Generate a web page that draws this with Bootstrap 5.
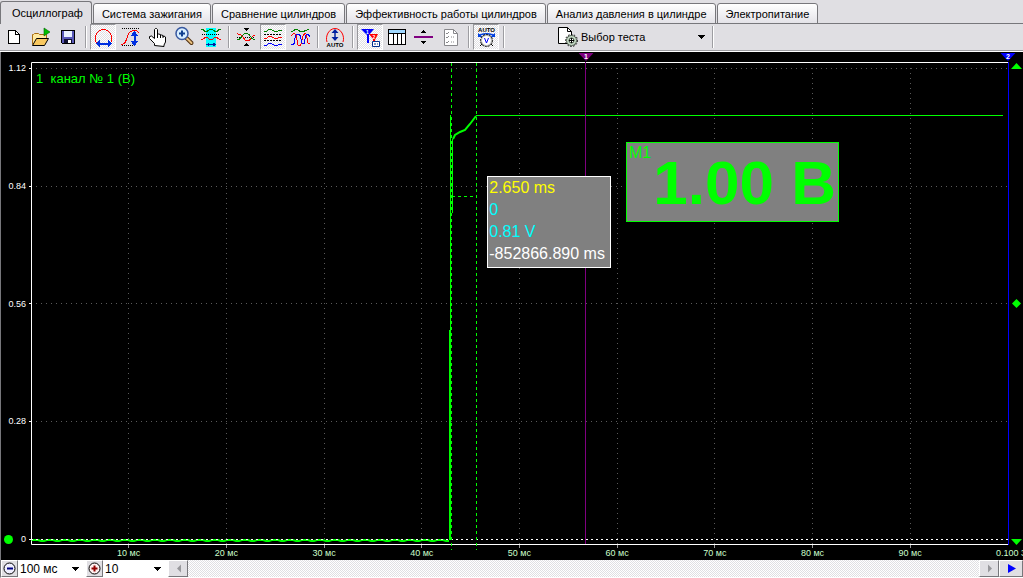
<!DOCTYPE html>
<html lang="ru">
<head>
<meta charset="utf-8">
<meta name="viewport" content="width=device-width, initial-scale=1">
<title>Осциллограф</title>
<link href="https://cdn.jsdelivr.net/npm/bootstrap@5.3.0/dist/css/bootstrap.min.css" rel="stylesheet">
<style>
  :root { --face: #e0dfe3; --edge: #9d9da1; --lime: #00ff00; }
  body { font-family: "Liberation Sans", Arial, sans-serif; font-size: 12px; line-height: 16px; background: var(--face); color: #000; }

  /* tabs */
  .mode-tabs { --bs-nav-tabs-border-width: 0; height: 24px; box-shadow: inset 0 -1px #77777b; gap: 1px; }
  .mode-tabs .nav-link { height: 21px; margin: 0; padding: 0 8px; font-size: 11px; line-height: 18px; color: #000; border: 1px solid #77777b; border-radius: 3px 3px 0 0; background: linear-gradient(#fff, #e4e3e8); white-space: nowrap; }
  .mode-tabs .nav-link.active { height: 23px; padding: 0 8px 0 11px; color: #000; background: var(--face); border-color: #77777b; border-bottom: 0; box-shadow: 0 1px var(--face); }

  /* toolbar */
  .tool-bar { height: 28px; padding: 0 0 2px 1px; gap: 1px; border-bottom: 1px solid #fff; box-shadow: inset 0 -1px var(--edge); }
  .tool { width: 26px; height: 26px; padding: 0; border: 1px solid transparent; border-radius: 0; background: none; line-height: 0; flex: none; }
  .tool svg { width: 24px; height: 24px; }
  .checker, .tool[aria-pressed="true"] { background: repeating-conic-gradient(#fff 0 25%, var(--face) 0 50%) 0 0 / 2px 2px; }
  .tool[aria-pressed="true"] { border-color: #98989c #fff #fff #98989c; }
  .divider { width: 2px; height: 22px; margin: 0 2px 0 3px; border-left: 1px solid var(--edge); border-right: 1px solid #fff; flex: none; }
  .pick { appearance: none; border: 0; border-radius: 0; padding: 0 18px 0 0; background: url("data:image/svg+xml,%3Csvg xmlns='http://www.w3.org/2000/svg' width='8' height='4' shape-rendering='crispEdges'%3E%3Cpath d='M0 0h7L3.500 4z'/%3E%3C/svg%3E") no-repeat right 6px center; color: #000; }
  .test-icon { width: 24px; height: 24px; margin-left: 48px; }
  .test-pick { width: 127px; height: 24px; font-size: 11px; background-position: right 2px center; }
  svg text { font-family: "Liberation Sans", Arial, sans-serif; font-weight: 700; text-anchor: middle; }

  /* chart */
  .scope { background: #000; border-left: 1px solid #77777b; padding-top: 10px; overflow: hidden; }
  .tick-text { font-size: 9px; line-height: 12px; color: #fff; }
  .level-axis { width: 30px; padding-right: 5px; }
  .level-axis span { text-align: right; }
  .zero-dot { left: 3px; bottom: 1px; width: 9px; height: 9px; border-radius: 50%; background: var(--lime); }
  .side-marks { width: 15px; padding-left: 3px; }
  .side-marks svg { width: 11px; height: 11px; }
  .plot svg.trace-area { display: block; position: absolute; inset: 0; width: 100%; height: 100%; overflow: visible; }
  .trace-area * { vector-effect: non-scaling-stroke; fill: none; }
  .grid-line { stroke: #5a5a5a; stroke-dasharray: 1 4; }
  .cursor-line { stroke: var(--lime); stroke-dasharray: 3 3; }
  .marker { top: -10px; width: 15px; height: 10px; transform: translateX(-50%); }
  .marker-one { left: 56.800%; }
  .marker-two { left: 100%; }
  .channel { font-size: 13px; line-height: 16px; color: var(--lime); left: 5px; top: 9px; white-space: pre; }
  .readout { left: 46.700%; top: 23.600%; padding: 0 5px 2px 1px; border: 1px solid #fff; background: #808080; color: #fff; font-size: 16px; line-height: 22px; white-space: nowrap; }
  .span-value { color: #ff0; }
  .level-value { color: #0ff; }
  .meter { left: 60.900%; top: 16.600%; width: 213px; height: 80px; border: 1px solid var(--lime); background: #808080; color: var(--lime); }
  .meter-name { left: 2px; top: 2px; font-size: 16px; line-height: 16px; }
  .meter-value { font-size: 62px; line-height: 80px; font-weight: 700; text-align: right; padding-right: 2px; white-space: nowrap; }
  .time-axis { height: 15px; padding: 2px 15px 0 30px; }
  .time-axis .tick-row { margin: 0 -5% 0 5%; }
  .time-axis span { flex: 0 0 10%; text-align: center; color: #cfc; white-space: nowrap; }
  .time-axis span:last-child { text-align: left; padding-left: 37px; }

  /* bottom bar */
  .scale-bar { height: 18px; background: var(--face); border-left: 1px solid #77777b; border-bottom: 1px solid #fff; }
  .step { height: 17px; width: 17px; padding: 0; border: 1px solid; border-color: #fff #77777b #77777b #fff; border-radius: 0; background: var(--face); line-height: 0; flex: none; }
  .step svg { width: 15px; height: 15px; }
  .step-wide { width: 20px; }
  .step-run { width: 24px; }
  .scale-bar .pick { background-color: #fff; height: 17px; padding-left: 2px; }
  .span-pick { width: 68px; }
  .gain-pick { width: 65px; }
</style>
</head>
<body class="d-flex flex-column min-vh-100">
<div class="nav nav-tabs mode-tabs flex-nowrap align-items-end" role="tablist">
  <button class="nav-link active" role="tab" aria-selected="true">Осциллограф</button>
  <button class="nav-link" role="tab">Система зажигания</button>
  <button class="nav-link" role="tab">Сравнение цилиндров</button>
  <button class="nav-link" role="tab">Эффективность работы цилиндров</button>
  <button class="nav-link" role="tab">Анализ давления в цилиндре</button>
  <button class="nav-link" role="tab">Электропитание</button>
</div>

<div class="tool-bar d-flex align-items-center" role="toolbar" aria-label="Инструменты">
  <button class="tool" aria-label="Новый"><svg viewBox="0 0 24 24" shape-rendering="crispEdges"><path d="M6.500 5.500h7l4 4v9h-11z" fill="#fff" stroke="#000"/><path d="M13.500 5.500v4h4" fill="none" stroke="#000"/></svg></button>
  <button class="tool" aria-label="Открыть"><svg viewBox="0 0 24 24"><path d="M3.500 19.500v-10h1l1-1h4l1 1h7v4" fill="#ffe9a0" stroke="#a86c10"/><path d="M3.500 20.500l4-7h12l-4 7z" fill="#f8c860" stroke="#000"/><path d="M15 3l6 4-6 4z" fill="#00c000" stroke="#006000" stroke-width=".6"/></svg></button>
  <button class="tool" aria-label="Сохранить"><svg viewBox="0 0 24 24" shape-rendering="crispEdges"><path d="M5.500 5.500h13v13h-12l-1-1z" fill="#5858b8" stroke="#000"/><path d="M8 6h8v6H8z" fill="#e8f0ff"/><path d="M8 14h8v4H8z" fill="#101030"/><path d="M12 15h3v3h-3z" fill="#fff"/></svg></button>
  <div class="divider"></div>
  <button class="tool" aria-pressed="true" aria-label="Масштаб по времени"><svg viewBox="0 0 24 24" shape-rendering="crispEdges"><path d="M5.500 18C2 13 6 4.500 12.500 4.500S23 13 19.500 18" fill="none" stroke="#f00"/><path d="M8 18.500h10" stroke="#0030e0" stroke-width="2"/><path d="M5 18.500l4-4v8zM21 18.500l-4-4v8z" fill="#0030e0"/></svg></button>
  <button class="tool" aria-label="Масштаб по уровню"><svg viewBox="0 0 24 24" shape-rendering="crispEdges"><path d="M4 3.500h17M4 20.500h12" stroke="#000" stroke-dasharray="1 1"/><path d="M3 19.500c8 0 4-14 13-14 3 0 4 1 5 2" fill="none" stroke="#f00"/><path d="M16.500 8v11" stroke="#0030e0" stroke-width="2"/><path d="M16.500 6l-4 5h8zM16.500 21l-4-5h8z" fill="#0030e0"/></svg></button>
  <button class="tool" aria-label="Рука"><svg viewBox="0 0 24 24"><path d="M9.500 20.500v-2L4.500 13.500v-2l2-.5 3 2.500V4.500l1-1h1l1 1v5l1-.5 2 .5v1l1-.5 1.500.5v1l1-.5 1.500 1v5l-1.500 3v1.500z" fill="#fff" stroke="#000"/><path d="M12.500 9v4M15.500 10v3M18 11v2" stroke="#000"/></svg></button>
  <button class="tool" aria-label="Лупа"><svg viewBox="0 0 24 24"><path d="M14.500 13l5 5" stroke="#503010" stroke-width="4" stroke-linecap="round"/><path d="M15 13.500l4.500 4.500" stroke="#e8c080" stroke-width="2" stroke-linecap="round"/><circle cx="10" cy="8.500" r="6" fill="#d8eeff" stroke="#3858a0" stroke-width="1.500"/><path d="M7 8.500h6M10 5.500v6" stroke="#104090" stroke-width="2"/></svg></button>
  <button class="tool" aria-label="Выделение интервала"><svg viewBox="0 0 24 24" shape-rendering="crispEdges"><path d="M7 3h10v19H7z" fill="#0ff"/><path d="M2 4c4 0 3 3 5 3s2-3 5-3 3 3 5 3 1-3 5-3" fill="none" stroke="#008000"/><path d="M3 9.500h18" stroke="#000" stroke-dasharray="1 1"/><path d="M2 15c3 0 3-3 5-3s3 3 5 3 3-3 5-3 2 3 5 3" fill="none" stroke="#f00"/><path d="M9 19.500h6" stroke="#0020a0"/><path d="M7 19.500l3-2v4zM17 19.500l-3-2v4z" fill="#0020a0"/></svg></button>
  <div class="divider"></div>
  <button class="tool" aria-label="Сжать"><svg viewBox="0 0 24 24" shape-rendering="crispEdges"><path d="M3 12.500h18" stroke="#000" stroke-dasharray="1 1"/><path d="M3 9c7-1 6 7 10 7s5-6 8-6" fill="none" stroke="#f00"/><path d="M3 15c5 0 5-7 9-7s5 7 9 7" fill="none" stroke="#008000"/><path d="M9 3h6l-3 3zM9 21h6l-3-3z"/></svg></button>
  <button class="tool" aria-pressed="true" aria-label="Раздельно"><svg viewBox="0 0 24 24" shape-rendering="crispEdges"><path d="M3 9.500h18M3 15.500h18" stroke="#000" stroke-dasharray="2 1"/><path d="M3 7c5 0 3-3 6-3s3 3 6 3 2-3 6-1" fill="none" stroke="#008000"/><path d="M3 14c5 0 3-3 6-3s3 3 6 3 2-3 6-1" fill="none" stroke="#f00"/><path d="M3 21c5 0 3-3 6-3s3 3 6 3 2-3 6-1" fill="none" stroke="#00f"/></svg></button>
  <button class="tool" aria-label="Наложить"><svg viewBox="0 0 24 24" shape-rendering="crispEdges"><path d="M3 7c3 0 3-3 5-3s3 3 6 3 3-3 7-2" fill="none" stroke="#008000"/><path d="M3 11c3-4 6-3 6 4 0 7 4 8 5 0s5-8 5-2 2 6 3 6" fill="none" stroke="#f00"/><path d="M3 20c4 0 3-2 4-7s5-6 6 1 4 6 4 0 3-6 5-2" fill="none" stroke="#00f"/></svg></button>
  <div class="divider"></div>
  <button class="tool" aria-label="Автомасштаб"><svg viewBox="0 0 24 24"><path d="M4 17C2 11 6 3.500 12 3.500s10 7.500 8 13.500" fill="none" stroke="#f00"/><path d="M12 6v8" stroke="#0020a0" stroke-width="1.500"/><path d="M12 4l-3.500 4h7zM12 16l-3.500-4h7z" fill="#0020a0"/><text x="12" y="22" font-size="6">AUTO</text></svg></button>
  <div class="divider"></div>
  <button class="tool" aria-pressed="true" aria-label="Маркеры"><svg viewBox="0 0 24 24"><path d="M3 4h13l-5 6v8h-2v-8z" fill="#00f"/><path d="M11 9h9l-3 6v3h-2v-4z" fill="#f00"/><text x="9.500" y="9" font-size="5" fill="#fff">1</text><text x="16" y="14" font-size="5" fill="#fff">2</text><path d="M14.500 16.500h7v5h-7z" fill="#fff" stroke="#003090"/><path d="M16 19h2m1 0h1" stroke="#003090"/></svg></button>
  <button class="tool" aria-label="Таблица"><svg viewBox="0 0 24 24" shape-rendering="crispEdges"><path d="M3.500 4.500h17v15h-17z" fill="#fff" stroke="#000"/><path d="M4 5h16v3H4z" fill="#a0d8ff"/><path d="M3.500 8.500h17M8.500 8v11M12.500 8v11M16.500 8v11" fill="none" stroke="#000"/></svg></button>
  <button class="tool" aria-label="Уровень"><svg viewBox="0 0 24 24" shape-rendering="crispEdges"><path d="M2 11h19v2H2z" fill="purple"/><path d="M9 8h5l-2.500-3zM9 16h5l-2.500 3z"/></svg></button>
  <button class="tool" aria-label="Список"><svg viewBox="0 0 24 24"><path d="M5.500 4.500h9l4 4v12h-13z" fill="#fff" stroke="#88888c"/><path d="M14.500 4.500v4h4M7 8l1 1 2-2M7 12l1 1 2-2M7 17l1 1 2-2M12 12h1m1 0h1M12 17h1m1 0h1" fill="none" stroke="#88888c"/></svg></button>
  <div class="divider"></div>
  <button class="tool" aria-pressed="true" aria-label="Автоматический вольтметр"><svg viewBox="0 0 24 24"><text x="12.500" y="7" font-size="6">AUTO</text><path d="M5 11c2-3 13-3 15 0" fill="none" stroke="#0040e0" stroke-width="1.500"/><path d="M4 8v4h5zM21 8v4h-5z" fill="#0040e0"/><path d="M6 21l2-2m9 0l2 2" stroke="#000"/><circle cx="12.500" cy="15.500" r="6" fill="#bbb" stroke="#000" stroke-dasharray="2 1"/><circle cx="12.500" cy="15.500" r="4.500" fill="#fff"/><path d="M10.500 13l2 5 2-5" fill="none" stroke="#00f"/></svg></button>
  <div class="divider"></div>
  <svg class="test-icon" viewBox="0 0 24 24"><path d="M2.500 2.500h9l4 4v12h-13z" fill="#fff" stroke="#000"/><path d="M11.500 2.500v4h4" fill="none" stroke="#000"/><circle cx="15.500" cy="15.500" r="5" fill="#c8dcc8" stroke="#506050"/><circle cx="15.500" cy="15.500" r="6" fill="none" stroke="#000" stroke-dasharray="1.500 1.500"/><circle cx="15.500" cy="15.500" r="2.500" fill="#fff" stroke="#304030"/><path d="M13 15.500h5M15.500 13v5" stroke="#000"/></svg>
  <select class="pick test-pick" aria-label="Выбор теста"><option>Выбор теста</option></select>
  <div class="divider"></div>
</div>

<main class="scope flex-grow-1 d-flex flex-column">
  <div class="d-flex flex-grow-1">
    <div class="level-axis tick-text position-relative d-flex flex-column justify-content-between">
      <span>1.12</span><span>0.84</span><span>0.56</span><span>0.28</span><span>0</span>
      <div class="zero-dot position-absolute"></div>
    </div>
    <div class="plot position-relative flex-grow-1">
      <svg class="trace-area" viewBox="0 0 977 483" preserveAspectRatio="none">
        <g id="grid"></g>
        <path stroke="#fff" d="M0.500 0.500H977M0.500 0.500V482.500H977"/>
        <path stroke="#fff" d="M-2 6.500H0M-2 124.500H0M-2 241.500H0M-2 359.500H0M-2 477.500H0"/>
        <path id="noise" stroke="#0f0" stroke-width="2"/>
        <path stroke="#fff" stroke-dasharray="2 3" d="M0 477.500H977"/>
        <path stroke="#0f0" stroke-width="2" d="M419 478V268"/>
        <path stroke="#0f0" d="M419.500 268V53M421.500 151V77"/>
        <path stroke="#0f0" stroke-width="2" d="M422 77L424 73L429 70L434 68L439 62L445 54"/>
        <path stroke="#0f0" d="M445 53.500H972"/>
        <path class="cursor-line" d="M420.500 1V488M445.500 1V488M421 134.500H445"/>
        <path stroke="purple" d="M554.500 0V482"/>
        <path stroke="#00f" d="M977.500 0V483"/>
      </svg>
      <svg class="marker marker-one position-absolute" viewBox="0 0 15 10"><path d="M0 1h15L7.500 9z" fill="purple"/><text x="7.500" y="7" font-size="7" fill="#fff">1</text></svg>
      <svg class="marker marker-two position-absolute" viewBox="0 0 15 10"><path d="M0 1h15L7.500 9z" fill="#00f"/><text x="7.500" y="7" font-size="7" fill="#fff">2</text></svg>
      <div class="channel position-absolute">1  канал № 1 (В)</div>
      <div class="readout position-absolute">
        <div class="span-value">2.650 ms</div>
        <div class="level-value">0</div>
        <div class="level-value">0.81 V</div>
        <div>-852866.890 ms</div>
      </div>
      <div class="meter position-absolute">
        <div class="meter-name position-absolute">M1</div>
        <div class="meter-value">1.00 В</div>
      </div>
    </div>
    <div class="side-marks d-flex flex-column justify-content-between">
      <svg viewBox="0 0 11 11"><path d="M0 7L5.500 1 11 7z" fill="#0f0"/></svg>
      <svg viewBox="0 0 11 11"><path d="M1 5.500L5.500 1 10 5.500 5.500 10z" fill="#0f0"/></svg>
      <svg viewBox="0 0 11 11"><path d="M0 5h11L5.500 11z" fill="#0f0"/></svg>
    </div>
  </div>
  <div class="time-axis tick-text">
    <div class="tick-row d-flex">
      <span>10 мс</span><span>20 мс</span><span>30 мс</span><span>40 мс</span><span>50 мс</span><span>60 мс</span><span>70 мс</span><span>80 мс</span><span>90 мс</span><span>0.100 3</span>
    </div>
  </div>
</main>

<footer class="scale-bar d-flex">
  <button class="step" aria-label="Уменьшить"><svg viewBox="0 0 15 15"><circle cx="7.500" cy="7.500" r="5.500" fill="#f0f0ff" stroke="#000"/><path d="M5 7.500h6" stroke="#000080" stroke-width="2"/></svg></button>
  <select class="pick span-pick" aria-label="Развёртка"><option>100 мс</option></select>
  <button class="step" aria-label="Увеличить"><svg viewBox="0 0 15 15"><circle cx="7.500" cy="7.500" r="5.500" fill="#fff0f0" stroke="#000"/><path d="M4.500 7.500h6M7.500 4.500v6" stroke="#900000" stroke-width="2"/></svg></button>
  <select class="pick gain-pick" aria-label="Усиление"><option>10</option></select>
  <button class="step step-wide" aria-label="Назад"><svg viewBox="0 0 15 15"><path d="M10 3.500v8L6 7.500z" fill="#98989c"/></svg></button>
  <div class="checker flex-grow-1"></div>
  <button class="step step-wide" aria-label="Вперёд"><svg viewBox="0 0 15 15"><path d="M6 3.500v8l4-4z" fill="#98989c"/></svg></button>
  <button class="step step-run" aria-label="Пуск"><svg viewBox="0 0 15 15"><path d="M4 3v9l8-4.500z" fill="#00f"/></svg></button>
</footer>

<script src="https://cdn.jsdelivr.net/npm/bootstrap@5.3.0/dist/js/bootstrap.bundle.min.js"></script>
<script>
  // dotted graticule: ten time divisions, four level divisions
  const divisions = [1, 2, 3, 4, 5, 6, 7, 8, 9];
  const levels = [6.5, 124.5, 241.5, 359.5];
  const columnPath = divisions.map(n => `M${Math.floor(n * 97.7) + 0.5} 6V482`).join('');
  const levelPath = levels.map(y => `M5 ${y}H977`).join('');
  const tickPath = divisions.map(n => `M${Math.floor(n * 97.7) + 0.5} 483V486`).join('');
  document.getElementById('grid').innerHTML =
    `<path class="grid-line" d="${columnPath}"/><path class="grid-line" d="${levelPath}"/><path stroke="#999" d="${tickPath}"/>`;
  // idle level with a little noise
  let d = 'M1 478.5';
  for (let x = 1; x < 419; x += 3) d += `L${x} ${(x * 7) % 5 < 2 ? 479 : 478}`;
  document.getElementById('noise').setAttribute('d', d);
</script>
</body>
</html>
